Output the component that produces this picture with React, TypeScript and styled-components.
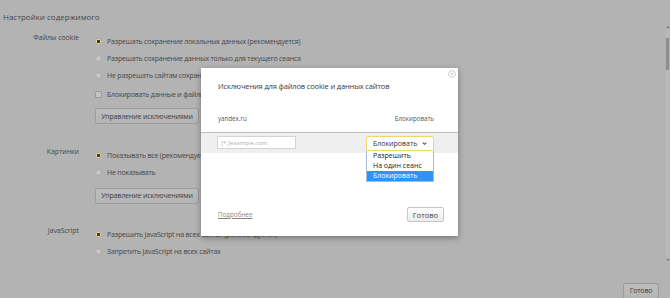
import styled, { createGlobalStyle } from 'styled-components'

const GlobalStyle = createGlobalStyle`
  html, body {
    margin: 0;
    padding: 0;
  }
  body {
    width: 670px;
    height: 298px;
    overflow: hidden;
    background: #b3b3b3;
    font-family: 'Open Sans', 'Noto Sans', sans-serif;
    color: #474747;
  }
  * {
    box-sizing: border-box;
  }
`

interface OptionRow {
  kind: 'radio' | 'checkbox'
  text: string
  checked?: boolean
  gap?: number
}

interface SectionData {
  label: string
  rows: OptionRow[]
  button?: string
  buttonGap?: number
}

const sections: SectionData[] = [
  {
    label: 'Файлы cookie',
    rows: [
      { kind: 'radio', text: 'Разрешать сохранение локальных данных (рекомендуется)', checked: true },
      { kind: 'radio', text: 'Разрешать сохранение данных только для текущего сеанса' },
      { kind: 'radio', text: 'Не разрешать сайтам сохранять данные' },
      { kind: 'checkbox', text: 'Блокировать данные и файлы cookie сторонних сайтов', gap: 2 },
    ],
    button: 'Управление исключениями',
    buttonGap: 5.5,
  },
  {
    label: 'Картинки',
    rows: [
      { kind: 'radio', text: 'Показывать все (рекомендуется)', checked: true },
      { kind: 'radio', text: 'Не показывать' },
    ],
    button: 'Управление исключениями',
    buttonGap: 7,
  },
  {
    label: 'JavaScript',
    rows: [
      { kind: 'radio', text: 'Разрешить JavaScript на всех сайтах (рекомендуется)', checked: true },
      { kind: 'radio', text: 'Запретить JavaScript на всех сайтах' },
    ],
  },
]

const options = ['Разрешить', 'На один сеанс', 'Блокировать']

const App = () => {
  return (
    <>
      <GlobalStyle />
      <Page>
        <Content>
          <PageTitle>Настройки содержимого</PageTitle>
          {sections.map((s) => (
            <Section key={s.label}>
              <SectionLabel>{s.label}</SectionLabel>
              <Controls>
                {s.rows.map((r) => (
                  <Row key={r.text} $gap={r.gap ?? 0}>
                    {r.kind === 'radio' ? <Radio $checked={!!r.checked} /> : <Checkbox />}
                    <span>{r.text}</span>
                  </Row>
                ))}
                {s.button && (
                  <GrayButton $gap={s.buttonGap ?? 0} $width={104}>
                    {s.button}
                  </GrayButton>
                )}
              </Controls>
            </Section>
          ))}
          <Footer>
            <GrayButton $gap={0} $width={36}>
              Готово
            </GrayButton>
          </Footer>
        </Content>
        <Scrollbar>
          <ScrollArrow>▴</ScrollArrow>
          <ScrollTrack>
            <ScrollThumb />
          </ScrollTrack>
          <ScrollArrow>▾</ScrollArrow>
        </Scrollbar>

        <Dialog>
          <CloseIcon viewBox="0 0 10 10">
            <circle cx="5" cy="5" r="4.3" fill="none" stroke="#c4c4c4" strokeWidth="1" />
            <path d="M3.3 3.3 L6.7 6.7 M6.7 3.3 L3.3 6.7" stroke="#c4c4c4" strokeWidth="1" />
          </CloseIcon>
          <DialogTitle>Исключения для файлов cookie и данных сайтов</DialogTitle>
          <TableHead>
            <span>yandex.ru</span>
            <span>Блокировать</span>
          </TableHead>
          <ExceptionRow>
            <PatternInput placeholder="[*.]example.com" />
            <SelectWrap>
              <SelectBox>
                <span>Блокировать</span>
                <Chevron viewBox="0 0 8 8">
                  <path d="M2 3 L4 5 L6 3" fill="none" stroke="#555" strokeWidth="1.2" />
                </Chevron>
              </SelectBox>
              <OptionList>
                {options.map((o) => (
                  <OptionItem key={o} $active={o === 'Блокировать'}>
                    {o}
                  </OptionItem>
                ))}
              </OptionList>
            </SelectWrap>
          </ExceptionRow>
          <DialogFooter>
            <MoreLink href="#">Подробнее</MoreLink>
            <WhiteButton>Готово</WhiteButton>
          </DialogFooter>
        </Dialog>
      </Page>
    </>
  )
}
export default App

const Page = styled.div`
  position: relative;
  display: flex;
  width: 670px;
  height: 298px;
`

const Content = styled.div`
  flex: 1;
  display: flex;
  flex-direction: column;
  padding-top: 11px;
`

const PageTitle = styled.div`
  font-size: 8px;
  line-height: 12px;
  padding-left: 3px;
  margin-bottom: 9.5px;
`

const Section = styled.div`
  display: grid;
  grid-template-columns: 79px 1fr;
  column-gap: 16px;
  margin-bottom: 22.5px;

  &:last-of-type {
    margin-bottom: 0;
  }
`

const SectionLabel = styled.div`
  font-size: 7px;
  line-height: 9px;
  letter-spacing: -0.05px;
  text-align: right;
`

const Controls = styled.div`
  display: flex;
  flex-direction: column;
  align-items: flex-start;
`

const Row = styled.div<{ $gap: number }>`
  display: flex;
  align-items: center;
  gap: 5px;
  height: 17px;
  margin-top: ${(p) => p.$gap}px;
  font-size: 7px;
  letter-spacing: -0.2px;
  white-space: nowrap;
`

const Radio = styled.span<{ $checked: boolean }>`
  width: 7px;
  height: 7px;
  border-radius: 50%;
  flex: none;
  border: 1px solid ${(p) => (p.$checked ? '#bfae7c' : '#a9a9a9')};
  background: ${(p) =>
    p.$checked ? 'radial-gradient(circle, #3a3a3a 0 1.4px, #e2d7b4 1.8px)' : '#c6c6c6'};
`

const Checkbox = styled.span`
  width: 7px;
  height: 7px;
  flex: none;
  border: 1px solid #999;
  border-radius: 1px;
  background: #c2c2c2;
`

const GrayButton = styled.button<{ $gap: number; $width: number }>`
  margin-top: ${(p) => p.$gap}px;
  width: ${(p) => p.$width}px;
  height: 16px;
  padding: 0;
  font-family: inherit;
  font-size: 7px;
  letter-spacing: -0.15px;
  color: #3f3f3f;
  background: linear-gradient(#bdbdbd, #b5b5b5);
  border: 1px solid #9c9c9c;
  border-radius: 2px;
  white-space: nowrap;
`

const Footer = styled.div`
  margin-top: auto;
  display: flex;
  justify-content: flex-end;
  padding: 0 6px 7px 0;
`

const Scrollbar = styled.div`
  width: 5px;
  display: flex;
  flex-direction: column;
  align-items: center;
  padding: 24px 0 36px;
`

const ScrollArrow = styled.div`
  font-size: 4px;
  line-height: 5px;
  color: #555;
`

const ScrollTrack = styled.div`
  flex: 1;
  width: 3px;
  background: #bababa;
  padding-top: 9px;
`

const ScrollThumb = styled.div`
  height: 32px;
  background: #8e8e8e;
`

const Dialog = styled.div`
  position: absolute;
  left: 201px;
  top: 68px;
  width: 257px;
  height: 168px;
  display: flex;
  flex-direction: column;
  background: #fff;
  box-shadow: 0 2px 6px rgba(0, 0, 0, 0.35);
`

const CloseIcon = styled.svg`
  position: absolute;
  top: 2px;
  right: 2px;
  width: 8px;
  height: 8px;
`

const DialogTitle = styled.div`
  padding: 12px 17px 0;
  font-size: 7.5px;
  line-height: 12px;
  letter-spacing: -0.15px;
  color: #3a3a3a;
`

const TableHead = styled.div`
  display: flex;
  justify-content: space-between;
  align-items: center;
  height: 41px;
  padding: 12px 24px 0 17px;
  font-size: 6.2px;
  color: #555;
  border-bottom: 1px solid #bcbcbc;
`

const ExceptionRow = styled.div`
  display: flex;
  justify-content: space-between;
  align-items: flex-start;
  height: 20px;
  padding: 3px 24px 0 16px;
  background: #efefef;
`

const PatternInput = styled.input`
  width: 79px;
  height: 13px;
  padding: 0 3px;
  font-family: inherit;
  font-size: 6px;
  border: 1px solid #d4d4d4;
  background: #fff;
  outline: none;

  &::placeholder {
    color: #b0b0b0;
  }
`

const SelectWrap = styled.div`
  position: relative;
  width: 68px;
`

const SelectBox = styled.div`
  display: flex;
  align-items: center;
  justify-content: space-between;
  height: 15px;
  padding: 0 5px 0 6px;
  font-size: 7px;
  color: #333;
  background: #fff;
  border: 1px solid #f0d572;
  border-radius: 2px;
`

const Chevron = styled.svg`
  width: 7px;
  height: 7px;
`

const OptionList = styled.div`
  position: absolute;
  top: 15px;
  left: 0;
  right: 0;
  background: #fff;
  border: 1px solid #a9b8d3;
  border-top: none;
`

const OptionItem = styled.div<{ $active: boolean }>`
  height: 10px;
  padding-left: 6px;
  font-size: 7px;
  line-height: 10px;
  color: ${(p) => (p.$active ? '#fff' : '#222')};
  background: ${(p) => (p.$active ? '#3392f7' : 'transparent')};
`

const DialogFooter = styled.div`
  margin-top: auto;
  display: flex;
  justify-content: space-between;
  align-items: center;
  padding: 0 14px 14px 17px;
`

const MoreLink = styled.a`
  font-size: 6.3px;
  color: #888;
  text-decoration: underline;
`

const WhiteButton = styled.button`
  width: 37px;
  height: 15px;
  padding: 0;
  font-family: inherit;
  font-size: 7.5px;
  color: #444;
  background: linear-gradient(#fdfdfd, #ededed);
  border: 1px solid #c6c6c6;
  border-radius: 2px;
`
